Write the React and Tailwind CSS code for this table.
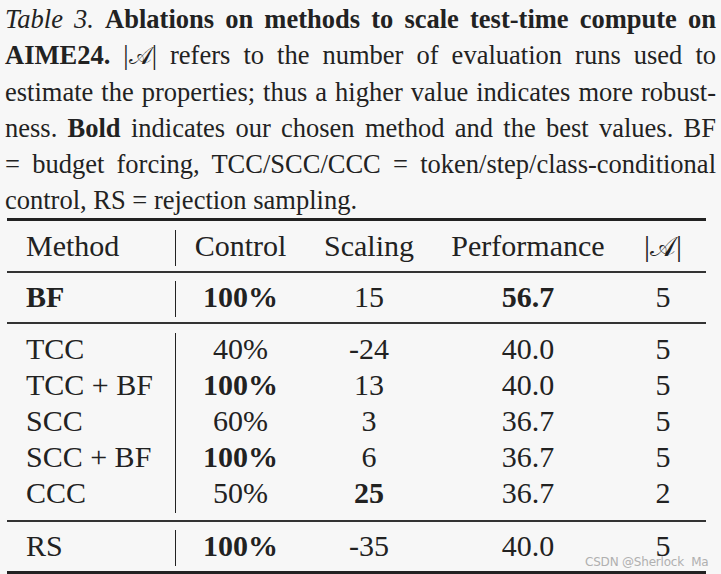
import React from 'react';

const serif = 'font-[Liberation_Serif,Times_New_Roman,serif]';
const cols = 'grid grid-cols-[169px_129px_128px_190px_80px] h-[36px] items-start leading-[31px]';

const CalA = () => (
    <span className="font-[DejaVu_Sans,serif] text-[0.9em]">𝒜</span>
);

const Row = ({ cells, bold = [] }) => (
    <div className={cols}>
        {cells.map((c, i) => (
            <div
                key={i}
                className={
                    (i === 0 ? 'h-full pl-[19px] border-r border-[#222] ' : 'text-center ') +
                    (bold.includes(i) ? 'font-bold' : '')
                }
            >
                {c}
            </div>
        ))}
    </div>
);

const Rule = ({ thick }) => <div className={thick ? 'h-[3px] bg-[#222]' : 'h-[2px] bg-[#333]'} />;

const App = () => {
    return (
        <div className={`relative w-[721px] h-[574px] overflow-hidden bg-[#f7f7f7] text-[#222] ${serif}`}>
            <div className="pt-[1px] px-[5px] text-[26.5px] leading-[36px]">
                <div className="text-justify [text-align-last:justify]">
                    <i>Table 3.</i> <b>Ablations on methods to scale test-time compute on</b>
                </div>
                <div className="text-justify [text-align-last:justify]">
                    <b>AIME24.</b> |<CalA />| refers to the number of evaluation runs used to
                </div>
                <div className="text-justify [text-align-last:justify]">
                    estimate the properties; thus a higher value indicates more robust-
                </div>
                <div className="text-justify [text-align-last:justify]">
                    ness. <b>Bold</b> indicates our chosen method and the best values. BF
                </div>
                <div className="text-justify [text-align-last:justify]">
                    = budget forcing, TCC/SCC/CCC = token/step/class-conditional
                </div>
                <div>control, RS = rejection sampling.</div>
            </div>

            <div className="ml-[7px] w-[699px] text-[30px]">
                <Rule thick />
                <div className="pt-[9px] pb-[5px]">
                    <Row cells={['Method', 'Control', 'Scaling', 'Performance', <>|<CalA />|</>]} />
                </div>
                <Rule />
                <div className="pt-[8px] pb-[5px]">
                    <Row cells={['BF', '100%', '15', '56.7', '5']} bold={[0, 1, 3]} />
                </div>
                <Rule />
                <div className="pt-[9px] pb-[7px]">
                    <Row cells={['TCC', '40%', '-24', '40.0', '5']} />
                    <Row cells={['TCC + BF', '100%', '13', '40.0', '5']} bold={[1]} />
                    <Row cells={['SCC', '60%', '3', '36.7', '5']} />
                    <Row cells={['SCC + BF', '100%', '6', '36.7', '5']} bold={[1]} />
                    <Row cells={['CCC', '50%', '25', '36.7', '2']} bold={[2]} />
                </div>
                <Rule />
                <div className="pt-[8px] pb-[5px]">
                    <Row cells={['RS', '100%', '-35', '40.0', '5']} bold={[1]} />
                </div>
                <Rule thick />
            </div>

            <div className="absolute left-[585px] top-[555px] text-[12px] leading-[14px] text-[#b0b0b0] font-[DejaVu_Sans,sans-serif] tracking-[-0.2px]">
                CSDN @Sherlock&nbsp;&nbsp;Ma
            </div>
        </div>
    );
};

export default App;
